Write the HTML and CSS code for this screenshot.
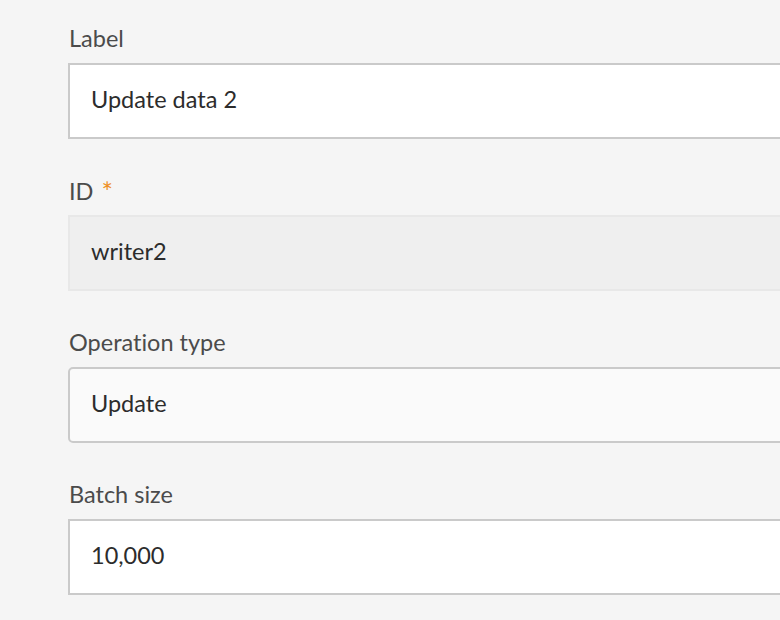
FILE: index.html
```html
<!DOCTYPE html>
<html>
<head>
<meta charset="utf-8">
<link rel="stylesheet" href="styles.css">
</head>
<body>
<div class="form">
  <div class="field">
    <div class="label">Label</div>
    <div class="control textfield">Update data 2</div>
  </div>
  <div class="field">
    <div class="label">ID <span class="req">*</span></div>
    <div class="control readonly">writer2</div>
  </div>
  <div class="field">
    <div class="label">Operation type</div>
    <div class="control picker">Update</div>
  </div>
  <div class="field">
    <div class="label">Batch size</div>
    <div class="control textfield">10,000</div>
  </div>
</div>
</body>
</html>
```
FILE: styles.css
```css
html, body {
  margin: 0;
  padding: 0;
  background: #f5f5f5;
  overflow: hidden;
}
body {
  width: 780px;
  height: 620px;
  font-family: Lato, "Open Sans", sans-serif;
  font-variant-ligatures: none;
}
.form {
  display: flex;
  flex-direction: column;
  gap: 36px;
  padding: 23px 0 0 68px;
  overflow: hidden;
}
.field {
  display: flex;
  flex-direction: column;
  gap: 10px;
}
.label {
  font-size: 23.5px;
  line-height: 30px;
  height: 30px;
  color: #4b4b4b;
  padding-left: 1px;
  display: flex;
  align-items: baseline;
}
.req {
  color: #ee8f25;
  margin-left: 8px;
  font-size: 27px;
  line-height: 30px;
  position: relative;
  top: 2px;
}
.control {
  box-sizing: border-box;
  width: 760px;
  height: 76px;
  flex: none;
  display: flex;
  align-items: center;
  padding: 0 0 4px 21px;
  font-size: 23.5px;
  line-height: 30px;
  color: #2c2c2c;
  border: 2px solid #cacaca;
  background: #ffffff;
}
.readonly {
  background: #efefef;
  border-color: #e8e8e8;
}
.picker {
  background: #fafafa;
  border-radius: 5px;
}
```
